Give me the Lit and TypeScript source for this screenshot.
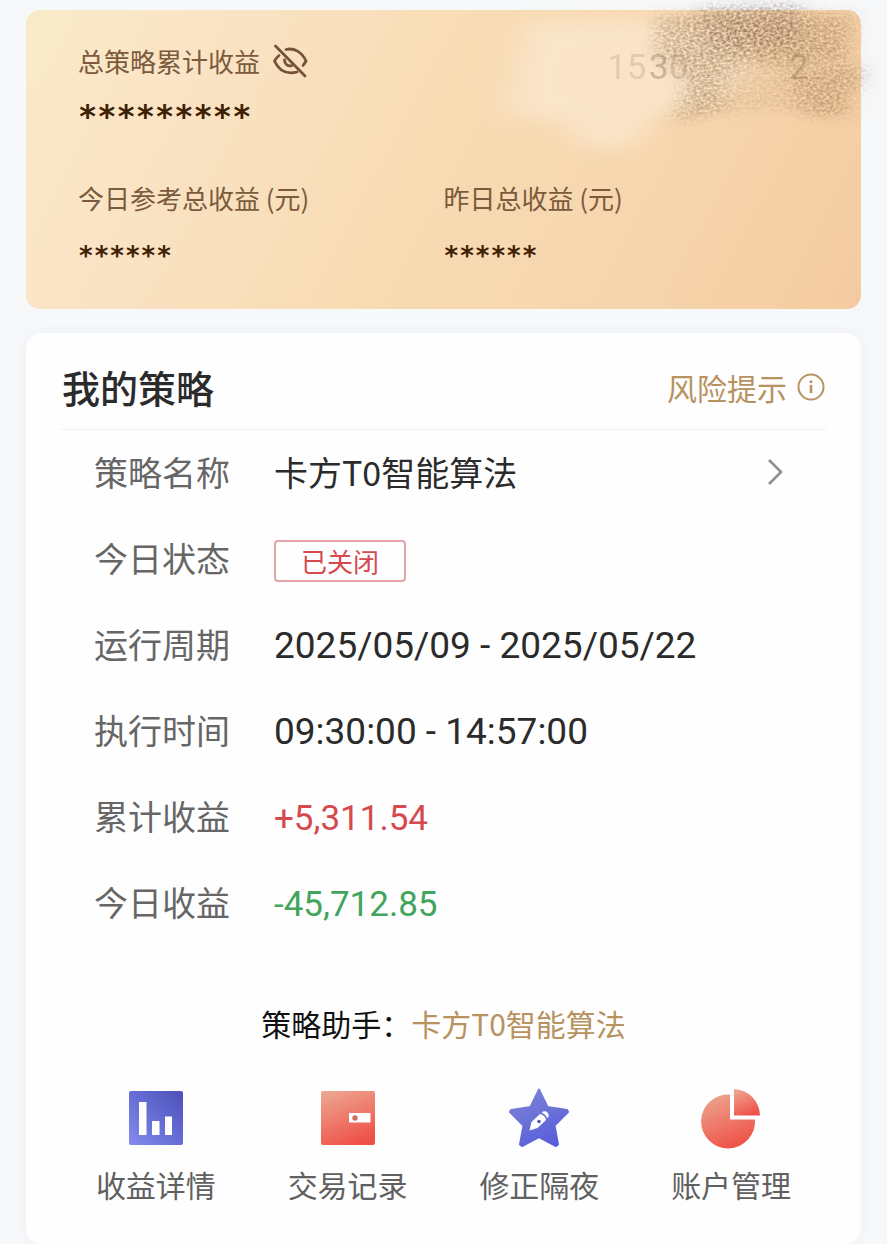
import { LitElement, html, css, svg } from "lit";
import { customElement, state } from "lit/decorators.js";

const rows = [
  { label: "运行周期", value: "2025/05/09 - 2025/05/22", kind: "period" },
  { label: "执行时间", value: "09:30:00 - 14:57:00", kind: "period" },
  { label: "累计收益", value: "+5,311.54", kind: "gain" },
  { label: "今日收益", value: "-45,712.85", kind: "loss" },
];

const blueFill = svg`<linearGradient id="blue" x1="1" y1="0" x2="0" y2="1"><stop offset="0" stop-color="#4c51b8"/><stop offset="0.5" stop-color="#666dd4"/><stop offset="1" stop-color="#858bee"/></linearGradient>`;
const starFill = svg`<linearGradient id="star" x1="0.2" y1="0" x2="0.7" y2="1"><stop offset="0" stop-color="#7b84d4"/><stop offset="1" stop-color="#595ddc"/></linearGradient>`;
const redFill = svg`<linearGradient id="red" x1="0.2" y1="0" x2="0.6" y2="1"><stop offset="0" stop-color="#eda48f"/><stop offset="1" stop-color="#ef5148"/></linearGradient>`;

const actions = [
  {
    label: "收益详情",
    icon: html`<svg class="glyph" viewBox="0 0 64 64" aria-hidden="true"><defs>${blueFill}</defs>
      <rect x="5" y="5" width="54" height="54" rx="2" fill="url(#blue)"/>
      <path d="M15 16h7.500v33H15zM28 35h7.500v14H28zM41 30.500h7v18.500h-7z" fill="#fff"/></svg>`,
  },
  {
    label: "交易记录",
    icon: html`<svg class="glyph" viewBox="0 0 64 64" aria-hidden="true"><defs>${redFill}</defs>
      <rect x="5" y="5" width="54" height="54" rx="2" fill="url(#red)"/>
      <path d="M33 27h21.500v9.500H33z" fill="#fff"/><circle cx="39" cy="32" r="2.700" fill="#d96c61"/></svg>`,
  },
  {
    label: "修正隔夜",
    icon: html`<svg class="glyph" viewBox="0 0 64 64" aria-hidden="true"><defs>${starFill}</defs>
      <path d="M32 3.500L40.500 21 60 24 61 26 47.500 39.500 51 58.500 49 60 32 51 15 60 13 58.500 16.500 39.500 3 26 4 24 23.500 21Z" fill="url(#star)" stroke="url(#star)" stroke-width="2" stroke-linejoin="round"/>
      <path d="M22.500 44.500L24.500 36 33 28C36 28.500 38.500 31 39 34L30.500 42Z" fill="#fff"/>
      <path d="M35 26.500C38.500 23.500 43.500 28 40.500 32C39.500 29.500 37.500 27.500 35 26.500Z" fill="#fff" stroke="#fff" stroke-width="0.600"/>
      <circle cx="32" cy="35.500" r="1.800" fill="#5158c0"/></svg>`,
  },
  {
    label: "账户管理",
    icon: html`<svg class="glyph" viewBox="0 0 64 64" aria-hidden="true"><defs>${redFill}</defs>
      <path d="M31 8.500V33.500H56A27 27 0 1 1 31 8.500Z" fill="url(#red)"/>
      <path d="M35 3A27 27 0 0 1 61 29.500H35Z" fill="url(#red)"/></svg>`,
  },
];

@customElement("app-root")
export class AppRoot extends LitElement {
  @state() private masked = true;

  static styles = css`
    :host {
      display: block;
      box-sizing: border-box;
      min-height: 100vh;
      padding: 10px 26px 0;
      overflow: hidden;
      background: #f6f8fa;
      color: #2b2b2b;
      font-family: "Noto Sans CJK SC", sans-serif;
    }
    * { box-sizing: border-box; }
    button, a {
      font: inherit;
      color: inherit;
      text-decoration: none;
      background: none;
      border: 0;
      padding: 0;
      margin: 0;
      cursor: pointer;
    }
    h2, p, dl, dd, dt { margin: 0; font-weight: 400; }
    .summary {
      position: relative;
      padding: 31px 52px 29px;
      border-radius: 14px;
      background: linear-gradient(118deg, #f9ebc8 0%, #fae4c6 18%, #f8dcb4 46%, #f7d6ae 72%, #f4cba0 100%);
      color: #7c5a3c;
      font-size: 26px;
      line-height: 40px;
    }
    .smudge {
      position: absolute;
      top: -10px;
      right: -26px;
      width: 410px;
      height: 190px;
      pointer-events: none;
    }
    .heading { position: relative; display: flex; align-items: center; gap: 12px; }
    .eye { display: flex; }
    .eye svg { width: 36px; height: 36px; }
    .mask { color: #3f2205; font-family: "DejaVu Sans Mono", monospace; font-weight: 700; }
    .mask.large { margin-top: 7px; font-size: 32px; line-height: 56px; }
    .mask.small { font-size: 26px; line-height: 48px; margin-top: 14px; }
    .split { position: relative; display: grid; grid-template-columns: 1fr 1fr; margin-top: 34px; }
    .strategy {
      margin-top: 24px;
      padding: 12px 34px 38px;
      border-radius: 16px;
      background: #fefefe;
      box-shadow: 0 0 16px rgba(60, 70, 90, 0.04);
    }
    .title {
      display: flex;
      align-items: center;
      justify-content: space-between;
      height: 85px;
      padding: 0 2px;
      border-bottom: 1px solid #f2f2f2;
    }
    .title h2 { font-size: 38px; line-height: 56px; font-weight: 500; }
    .risk { display: flex; align-items: center; gap: 10px; color: #b8925f; font-size: 30px; line-height: 44px; }
    .risk svg { width: 28px; height: 28px; }
    .fields { padding: 0 34px; }
    .row { display: flex; align-items: baseline; height: 86px; padding-top: 17px; font-size: 34px; line-height: 50px; }
    .row dt { width: 180px; color: #666; }
    .row dd { flex: 1; }
    .name { display: flex; align-items: center; justify-content: space-between; }
    .name svg { width: 20px; height: 30px; margin-right: 8px; }
    .status {
      display: inline-block;
      padding: 0 25px;
      border: 2px solid #e3a3a7;
      border-radius: 4px;
      color: #d5494f;
      font-size: 26px;
      line-height: 38px;
    }
    .row .period, .row .gain, .row .loss { font-family: Roboto, "Noto Sans CJK SC", sans-serif; }
    .period { font-size: 37px; }
    .gain { font-size: 35px; color: #d5494f; }
    .loss { font-size: 35px; color: #41a55c; }
    .helper { margin-top: 55px; text-align: center; font-size: 30px; line-height: 44px; color: #111; }
    .helper a { color: #b8925f; }
    .actions { display: grid; grid-template-columns: repeat(4, 1fr); margin-top: 41px; }
    .action { display: flex; flex-direction: column; align-items: center; gap: 12px; color: #606060; font-size: 30px; line-height: 44px; }
    .glyph { width: 64px; height: 64px; }
  `;

  private toggle() {
    this.masked = !this.masked;
  }

  render() {
    return html`
      <section class="summary">
        <svg class="smudge" viewBox="0 0 410 190" aria-hidden="true">
          <defs>
            <filter id="chalk" x="-20%" y="-30%" width="140%" height="160%">
              <feGaussianBlur in="SourceGraphic" stdDeviation="10 6" result="soft"/>
              <feTurbulence type="fractalNoise" baseFrequency="0.3 0.4" numOctaves="3" seed="8"/>
              <feColorMatrix values="0 0 0 0 0  0 0 0 0 0  0 0 0 0 0  2 0 0 0 -0.500" result="grain"/>
              <feComposite in="soft" in2="grain" operator="in" result="dust"/>
              <feGaussianBlur in="dust" stdDeviation="0.700"/>
            </filter>
            <filter id="wash" x="-20%" y="-20%" width="140%" height="140%"><feGaussianBlur stdDeviation="16 9"/></filter>
          </defs>
          <path d="M50 22L210 18 280 60 240 108 180 114 150 150 105 146 88 122 30 114Z" fill="#fbe9d2" opacity="0.75" filter="url(#wash)"/>
          <g filter="url(#chalk)">
            <path d="M180 16L376 14 370 60 300 66 262 60 240 84 250 110 196 124 210 80 180 56Z" fill="#a58058" opacity="0.65"/>
            <path d="M220 8L326 4 322 48 236 52Z" fill="#86685a" opacity="0.6"/>
            <path d="M310 74L388 64 386 86 372 92 372 118 326 116Z" fill="#a07a50" opacity="0.55"/>
            <path d="M220 40H372V112H230Z" fill="#b08c64" opacity="0.3"/>
          </g>
          <g fill="#7b604a" font-family="Roboto, sans-serif" font-size="35">
            <text x="130" y="79" opacity="0.18">15</text><text x="172" y="79" opacity="0.35">3</text><text x="192" y="79" opacity="0.22">0.</text><text x="312" y="79" opacity="0.35">2</text>
          </g>
        </svg>
        <div class="heading">
          <span>总策略累计收益</span>
          <button class="eye" aria-label="显示或隐藏收益" aria-pressed=${this.masked} @click=${this.toggle}>
            <svg viewBox="0 0 36 36" fill="none" stroke="#765238" stroke-width="2.800" stroke-linecap="round">
              <path d="M14 6.500C22 4.500 30 9 34 18Q33 20 31 22.500M7 12.500Q4 15 2.500 18C7 28 15 31.500 25 29"/>
              <path d="M12.500 17C12.500 21 16 24 20 22.500"/><path d="M3.500 3L33 33"/>
            </svg>
          </button>
        </div>
        <p class="mask large">*********</p>
        <div class="split">
          <div><p>今日参考总收益 (元)</p><p class="mask small">******</p></div>
          <div><p>昨日总收益 (元)</p><p class="mask small">******</p></div>
        </div>
      </section>

      <section class="strategy">
        <header class="title">
          <h2>我的策略</h2>
          <button class="risk">
            <span>风险提示</span>
            <svg viewBox="0 0 28 28" fill="none" stroke="currentColor" stroke-width="2" aria-hidden="true">
              <circle cx="14" cy="14" r="12.500"/><path d="M14 12v8M14 7.500v2.500" stroke-width="2.600"/>
            </svg>
          </button>
        </header>
        <dl class="fields">
          <div class="row">
            <dt>策略名称</dt>
            <dd><a class="name" href="#strategy"><span>卡方T0智能算法</span>
              <svg viewBox="0 0 20 30" fill="none" stroke="#909090" stroke-width="2.600" aria-hidden="true"><path d="M4 3L16 15 4 27"/></svg></a></dd>
          </div>
          <div class="row"><dt>今日状态</dt><dd><span class="status">已关闭</span></dd></div>
          ${rows.map((r) => html`<div class="row"><dt>${r.label}</dt><dd class=${r.kind}>${r.value}</dd></div>`)}
        </dl>
        <p class="helper">策略助手：<a href="#assistant">卡方T0智能算法</a></p>
        <nav class="actions">
          ${actions.map((a) => html`<button class="action">${a.icon}<span>${a.label}</span></button>`)}
        </nav>
      </section>
    `;
  }
}
